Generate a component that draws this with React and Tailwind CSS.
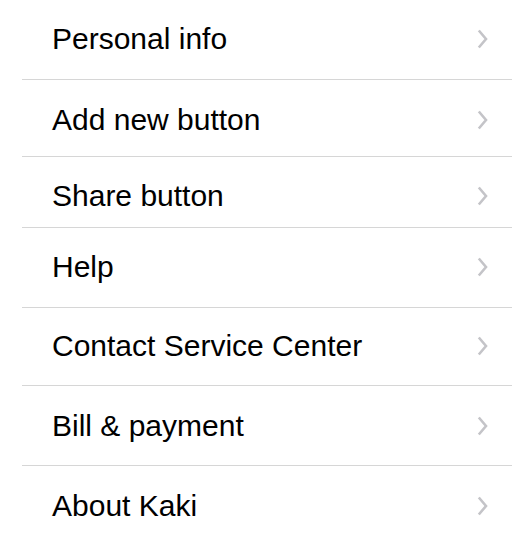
import React from "react";

const rows = [
  { label: "Personal info", h: "h-[80px]", pt: "pt-[22px]" },
  { label: "Add new button", h: "h-[77px]", pt: "pt-[23px]" },
  { label: "Share button", h: "h-[71px]", pt: "pt-[22px]" },
  { label: "Help", h: "h-[80px]", pt: "pt-[22px]" },
  { label: "Contact Service Center", h: "h-[78px]", pt: "pt-[21px]" },
  { label: "Bill & payment", h: "h-[80px]", pt: "pt-[23px]" },
  { label: "About Kaki", h: "h-[81px]", pt: "pt-[23px]", last: true },
];

const Chevron = () => (
  <svg width="11" height="20" viewBox="0 0 11 20" fill="none">
    <path d="M1.8 1.5 L9 10 L1.8 18.5" stroke="#c4c4c8" strokeWidth="2.6" />
  </svg>
);

const App = () => {
  return (
    <div className="w-[512px] h-[547px] bg-white overflow-hidden font-['Liberation_Sans',Arial,sans-serif]">
      <div className="pl-[22px]">
        {rows.map((row) => (
          <div
            key={row.label}
            className={`${row.h} ${row.pt} ${row.last ? "" : "border-b border-[#d6d6d6]"}`}
          >
            <div className="flex items-center justify-between pl-[30px] pr-[24px] h-[34px]">
              <span className="text-[30px] leading-[34px] text-black">{row.label}</span>
              <Chevron />
            </div>
          </div>
        ))}
      </div>
    </div>
  );
};

export default App;
